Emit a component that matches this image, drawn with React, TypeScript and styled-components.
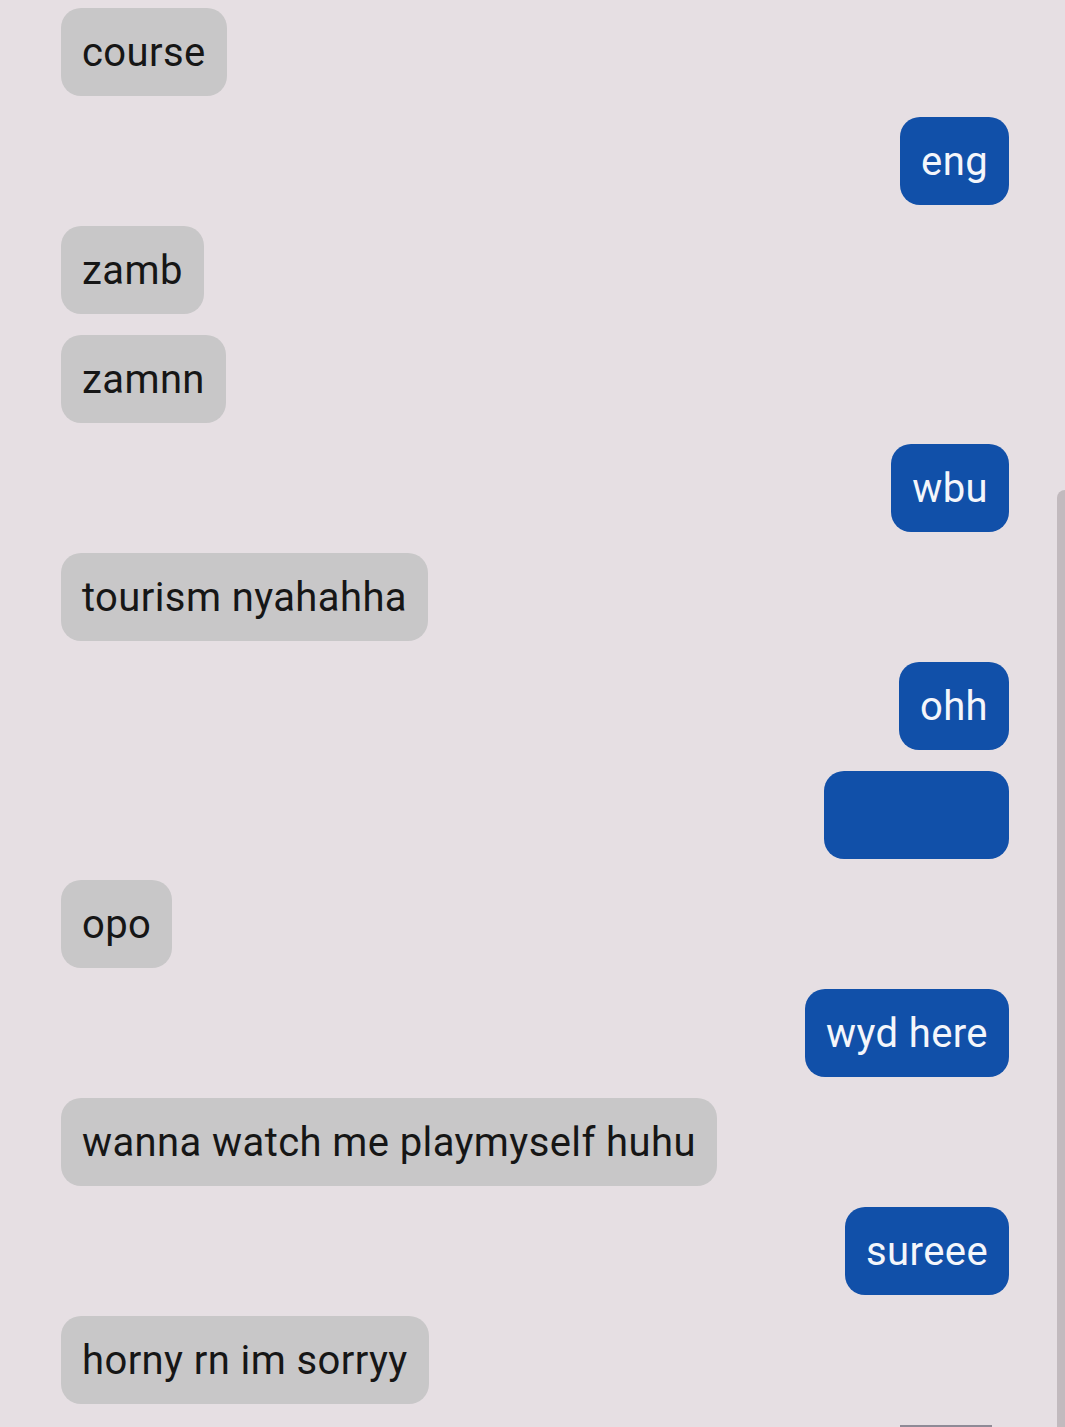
import React from "react";
import styled, { createGlobalStyle } from "styled-components";

const Global = createGlobalStyle`
  html, body { margin: 0; padding: 0; background: #e6dfe3; }
  body { font-family: Roboto, "Noto Sans", sans-serif; }
`;

const Page = styled.div`
  position: relative;
  width: 1065px;
  height: 1427px;
  overflow: hidden;
  background: #e6dfe3;
`;

const List = styled.div`
  display: flex;
  flex-direction: column;
  gap: 21px;
  padding: 8px 56px 0 61px;
`;

const Row = styled.div<{ $mine: boolean }>`
  display: flex;
  justify-content: ${(p) => (p.$mine ? "flex-end" : "flex-start")};
`;

const Bubble = styled.div<{ $mine: boolean; $w?: number }>`
  box-sizing: border-box;
  height: 88px;
  display: flex;
  align-items: center;
  padding: 0 21px;
  border-radius: 20px;
  font-size: 40px;
  letter-spacing: 0.4px;
  background: ${(p) => (p.$mine ? "#1150a9" : "#c8c7c8")};
  color: ${(p) => (p.$mine ? "#f4f6fb" : "#161616")};
  ${(p) => (p.$w ? `width: ${p.$w}px;` : "")}
`;

const Scrollbar = styled.div`
  position: absolute;
  right: 0;
  top: 490px;
  width: 8px;
  height: 937px;
  background: #c2babe;
  border-top-left-radius: 8px;
`;

const BottomLine = styled.div`
  position: absolute;
  left: 900px;
  bottom: 0;
  width: 92px;
  height: 2px;
  background: #8e8a96;
`;

const messages: { text: string; mine: boolean; w?: number }[] = [
  { text: "course", mine: false },
  { text: "eng", mine: true },
  { text: "zamb", mine: false },
  { text: "zamnn", mine: false },
  { text: "wbu", mine: true },
  { text: "tourism nyahahha", mine: false },
  { text: "ohh", mine: true },
  { text: "", mine: true, w: 185 },
  { text: "opo", mine: false },
  { text: "wyd here", mine: true },
  { text: "wanna watch me playmyself huhu", mine: false },
  { text: "sureee", mine: true },
  { text: "horny rn im sorryy", mine: false },
];

export default function App() {
  return (
    <Page>
      <Global />
      <List>
        {messages.map((m, i) => (
          <Row key={i} $mine={m.mine}>
            <Bubble $mine={m.mine} $w={m.w}>
              {m.text}
            </Bubble>
          </Row>
        ))}
      </List>
      <Scrollbar />
      <BottomLine />
    </Page>
  );
}
